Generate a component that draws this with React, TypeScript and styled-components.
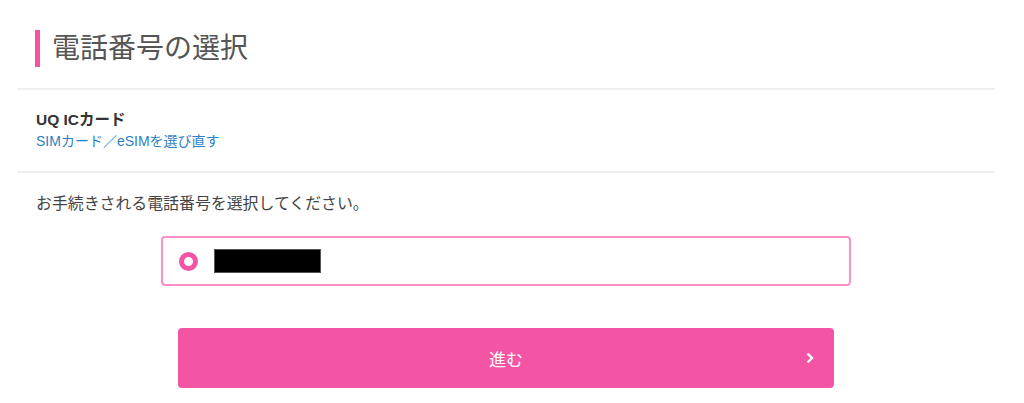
import styled, { createGlobalStyle } from "styled-components";

const GlobalStyle = createGlobalStyle`
  body {
    margin: 0;
    background: #fff;
    font-family: "Liberation Sans", "Noto Sans CJK JP", sans-serif;
    color: #333;
  }
`;

const Page = styled.div`
  margin: 0 29px 0 17px;
`;

const Header = styled.header`
  padding: 30px 0 21px 18px;
  border-bottom: 2px solid #efefef;
`;

const Title = styled.h1`
  margin: 0;
  padding-left: 12px;
  border-left: 5px solid #f454a4;
  height: 37px;
  line-height: 37px;
  font-size: 28px;
  font-weight: normal;
  color: #555;
`;

const Section = styled.section`
  padding: 19px 19px 20px;
  border-bottom: 2px solid #efefef;
  display: flex;
  flex-direction: column;
  gap: 1px;
`;

const CardName = styled.div`
  font-size: 15.5px;
  line-height: 21px;
  font-weight: bold;
  color: #333;
`;

const ReselectLink = styled.a`
  font-size: 14px;
  line-height: 20px;
  color: #2c7fc4;
  text-decoration: none;
`;

const Body = styled.div`
  padding: 20px 19px 0;
  display: flex;
  flex-direction: column;
  align-items: center;
`;

const Lead = styled.p`
  align-self: stretch;
  margin: 0;
  font-size: 15.9px;
  line-height: 22px;
  color: #444;
`;

const NumberOption = styled.label`
  box-sizing: border-box;
  margin-top: 21px;
  width: 690px;
  height: 50px;
  border: 2px solid #ff8fc6;
  border-radius: 4px;
  display: flex;
  align-items: center;
  padding-left: 16px;
  gap: 16px;
  cursor: pointer;
`;

const Radio = styled.span`
  box-sizing: border-box;
  width: 19px;
  height: 19px;
  border-radius: 50%;
  border: 5px solid #f454a4;
  background: #fff;
`;

const Masked = styled.span`
  width: 107px;
  height: 24px;
  background: #000;
  border: 1px solid #555;
  box-sizing: border-box;
`;

const NextButton = styled.button`
  margin-top: 42px;
  width: 656px;
  height: 60px;
  border: none;
  border-radius: 4px;
  background: #f454a4;
  color: #fff;
  font-family: inherit;
  font-size: 17px;
  display: grid;
  grid-template-columns: 40px 1fr 40px;
  align-items: center;
  cursor: pointer;
  padding: 0;
`;

const ButtonLabel = styled.span`
  grid-column: 2;
  text-align: center;
`;

const Chevron = styled.svg`
  grid-column: 3;
  justify-self: start;
  margin-left: 11px;
`;

export default function App() {
  return (
    <>
      <GlobalStyle />
      <Page>
        <Header>
          <Title>電話番号の選択</Title>
        </Header>
        <Section>
          <CardName>UQ ICカード</CardName>
          <ReselectLink href="#">SIMカード／eSIMを選び直す</ReselectLink>
        </Section>
        <Body>
          <Lead>お手続きされる電話番号を選択してください。</Lead>
          <NumberOption>
            <Radio />
            <Masked />
          </NumberOption>
          <NextButton type="button">
            <ButtonLabel>進む</ButtonLabel>
            <Chevron width="10" height="12" viewBox="0 0 10 12">
              <polyline
                points="2.5,1.5 7,6 2.5,10.5"
                fill="none"
                stroke="#fff"
                strokeWidth="2.4"
              />
            </Chevron>
          </NextButton>
        </Body>
      </Page>
    </>
  );
}
